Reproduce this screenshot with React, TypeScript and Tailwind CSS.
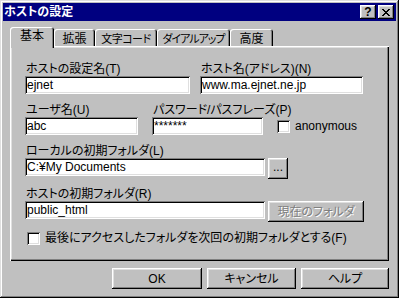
const font = "font-['Liberation_Sans','Noto_Sans_CJK_JP',sans-serif] [font-feature-settings:'palt']";
const raised =
  "shadow-[inset_-1px_-1px_0_#000,inset_1px_1px_0_#fff,inset_-2px_-2px_0_#808080,inset_2px_2px_0_#dfdfdf]";
const sunken =
  "shadow-[inset_1px_1px_0_#808080,inset_-1px_-1px_0_#fff,inset_2px_2px_0_#000,inset_-2px_-2px_0_#dfdfdf]";

function Field({ value, className }: { value: string; className: string }) {
  return (
    <div className={`h-[18px] bg-white pl-[2px] pt-[2px] text-[12px] leading-[14px] text-black whitespace-nowrap ${sunken} ${className}`}>
      {value}
    </div>
  );
}

function Label({ text, className = "" }: { text: string; className?: string }) {
  return <div className={`h-[13px] pl-[1px] text-[12px] leading-[12px] whitespace-nowrap ${className}`}>{text}</div>;
}

function Check() {
  return <div className={`w-[13px] h-[13px] bg-white shrink-0 ${sunken}`} />;
}

function Btn({ children, className }: { children: React.ReactNode; className: string }) {
  return (
    <div className={`h-[21px] flex items-center justify-center text-[12px] leading-[12px] ${raised} ${className}`}>
      {children}
    </div>
  );
}

const tabs = [
  { label: "基本", w: "w-[44px]", t: "text-[12px]", on: true },
  { label: "拡張", w: "w-[41px]", t: "text-[12px]", on: false },
  { label: "文字コード", w: "w-[62px]", t: "text-[11px] tracking-[-0.5px]", on: false },
  { label: "ダイアルアップ", w: "w-[73px]", t: "text-[11px] tracking-[-1px]", on: false },
  { label: "高度", w: "w-[43px]", t: "text-[12px]", on: false },
];

export default function App() {
  return (
    <div
      className={`w-[399px] h-[298px] bg-[#c0c0c0] p-[3px] text-black ${font} shadow-[inset_-1px_-1px_0_#000,inset_1px_1px_0_#dfdfdf,inset_-2px_-2px_0_#808080,inset_2px_2px_0_#fff]`}
    >
      {/* title bar */}
      <div className="h-[18px] bg-[#000080] flex items-center pl-[1px] pr-[2px]">
        <span className="text-white font-bold text-[12px] leading-[12px] flex-1">ホストの設定</span>
        <div className="flex gap-[2px]">
          <div className={`w-[16px] h-[14px] bg-[#c0c0c0] flex items-center justify-center font-bold text-[12px] leading-[12px] ${raised}`}>
            ?
          </div>
          <div className={`w-[16px] h-[14px] bg-[#c0c0c0] flex items-center justify-center ${raised}`}>
            <svg width="8" height="7" viewBox="0 0 8 7" shapeRendering="crispEdges">
              <path d="M0 0h2v1h-2zM6 0h2v1h-2zM1 1h2v1h-2zM5 1h2v1h-2zM2 2h4v1h-4zM3 3h2v1h-2zM2 4h4v1h-4zM1 5h2v1h-2zM5 5h2v1h-2zM0 6h2v1h-2zM6 6h2v1h-2z" fill="#000" />
            </svg>
          </div>
        </div>
      </div>

      <div className="px-[7px] pt-[6px]">
        {/* tabs */}
        <div className="flex items-end h-[19px]">
          {tabs.map((t) =>
            t.on ? (
              <div
                key={t.label}
                className={`${t.w} ${t.t} h-[21px] mb-[-2px] relative z-10 bg-[#c0c0c0] rounded-t-[3px] flex justify-center pt-[3px] leading-[12px] whitespace-nowrap shadow-[inset_1px_1px_0_#fff,inset_-1px_0_0_#000,inset_-2px_0_0_#808080]`}
              >
                {t.label}
              </div>
            ) : (
              <div
                key={t.label}
                className={`${t.w} ${t.t} h-[17px] bg-[#c0c0c0] rounded-t-[3px] flex justify-center items-start pt-[4px] leading-[12px] whitespace-nowrap shadow-[inset_1px_1px_0_#fff,inset_-1px_0_0_#000,inset_-2px_0_0_#808080]`}
              >
                {t.label}
              </div>
            )
          )}
        </div>

        {/* panel */}
        <div className="h-[215px] flex flex-col pl-[15px] shadow-[inset_1px_1px_0_#fff,inset_-1px_-1px_0_#000,inset_-2px_-2px_0_#808080,inset_2px_2px_0_#dfdfdf]">
          <div className="flex gap-[10px] mt-[17px]">
            <div className="flex flex-col">
              <Label text="ホストの設定名(T)" />
              <Field value="ejnet" className="w-[165px]" />
            </div>
            <div className="flex flex-col">
              <Label text="ホスト名(アドレス)(N)" />
              <Field value="www.ma.ejnet.ne.jp" className="w-[163px]" />
            </div>
          </div>

          <div className="flex mt-[10px]">
            <div className="flex flex-col w-[113px]">
              <Label text="ユーザ名(U)" />
              <Field value="abc" className="w-[113px]" />
            </div>
            <div className="flex flex-col w-[111px] ml-[14px]">
              <Label text="パスワード/パスフレーズ(P)" />
              <Field value="*******" className="w-[111px]" />
            </div>
            <div className="flex items-end">
              <div className="flex items-center h-[18px] ml-[14px] gap-[5px] text-[12px] leading-[12px]">
                <Check />
                <span>anonymous</span>
              </div>
            </div>
          </div>

          <Label text="ローカルの初期フォルダ(L)" className="mt-[10px]" />
          <div className="flex items-start gap-[3px]">
            <Field value="C:¥My Documents" className="w-[240px]" />
            <Btn className="w-[20px] pb-[4px]">...</Btn>
          </div>

          <Label text="ホストの初期フォルダ(R)" className="mt-[9px]" />
          <div className="flex items-start gap-[3px]">
            <Field value="public_html" className="w-[240px]" />
            <Btn className="w-[96px] text-[#808080] [text-shadow:1px_1px_0_#fff]">現在のフォルダ</Btn>
          </div>

          <div className="flex items-center gap-[5px] mt-[10px] ml-[2px] text-[12px] leading-[13px]">
            <Check />
            <span className="whitespace-nowrap">最後にアクセスしたフォルダを次回の初期フォルダとする(F)</span>
          </div>
        </div>

        {/* buttons */}
        <div className="flex justify-end gap-[5px] mt-[7px]">
          <Btn className="w-[90px]">OK</Btn>
          <Btn className="w-[89px]">キャンセル</Btn>
          <Btn className="w-[88px]">ヘルプ</Btn>
        </div>
      </div>
    </div>
  );
}
